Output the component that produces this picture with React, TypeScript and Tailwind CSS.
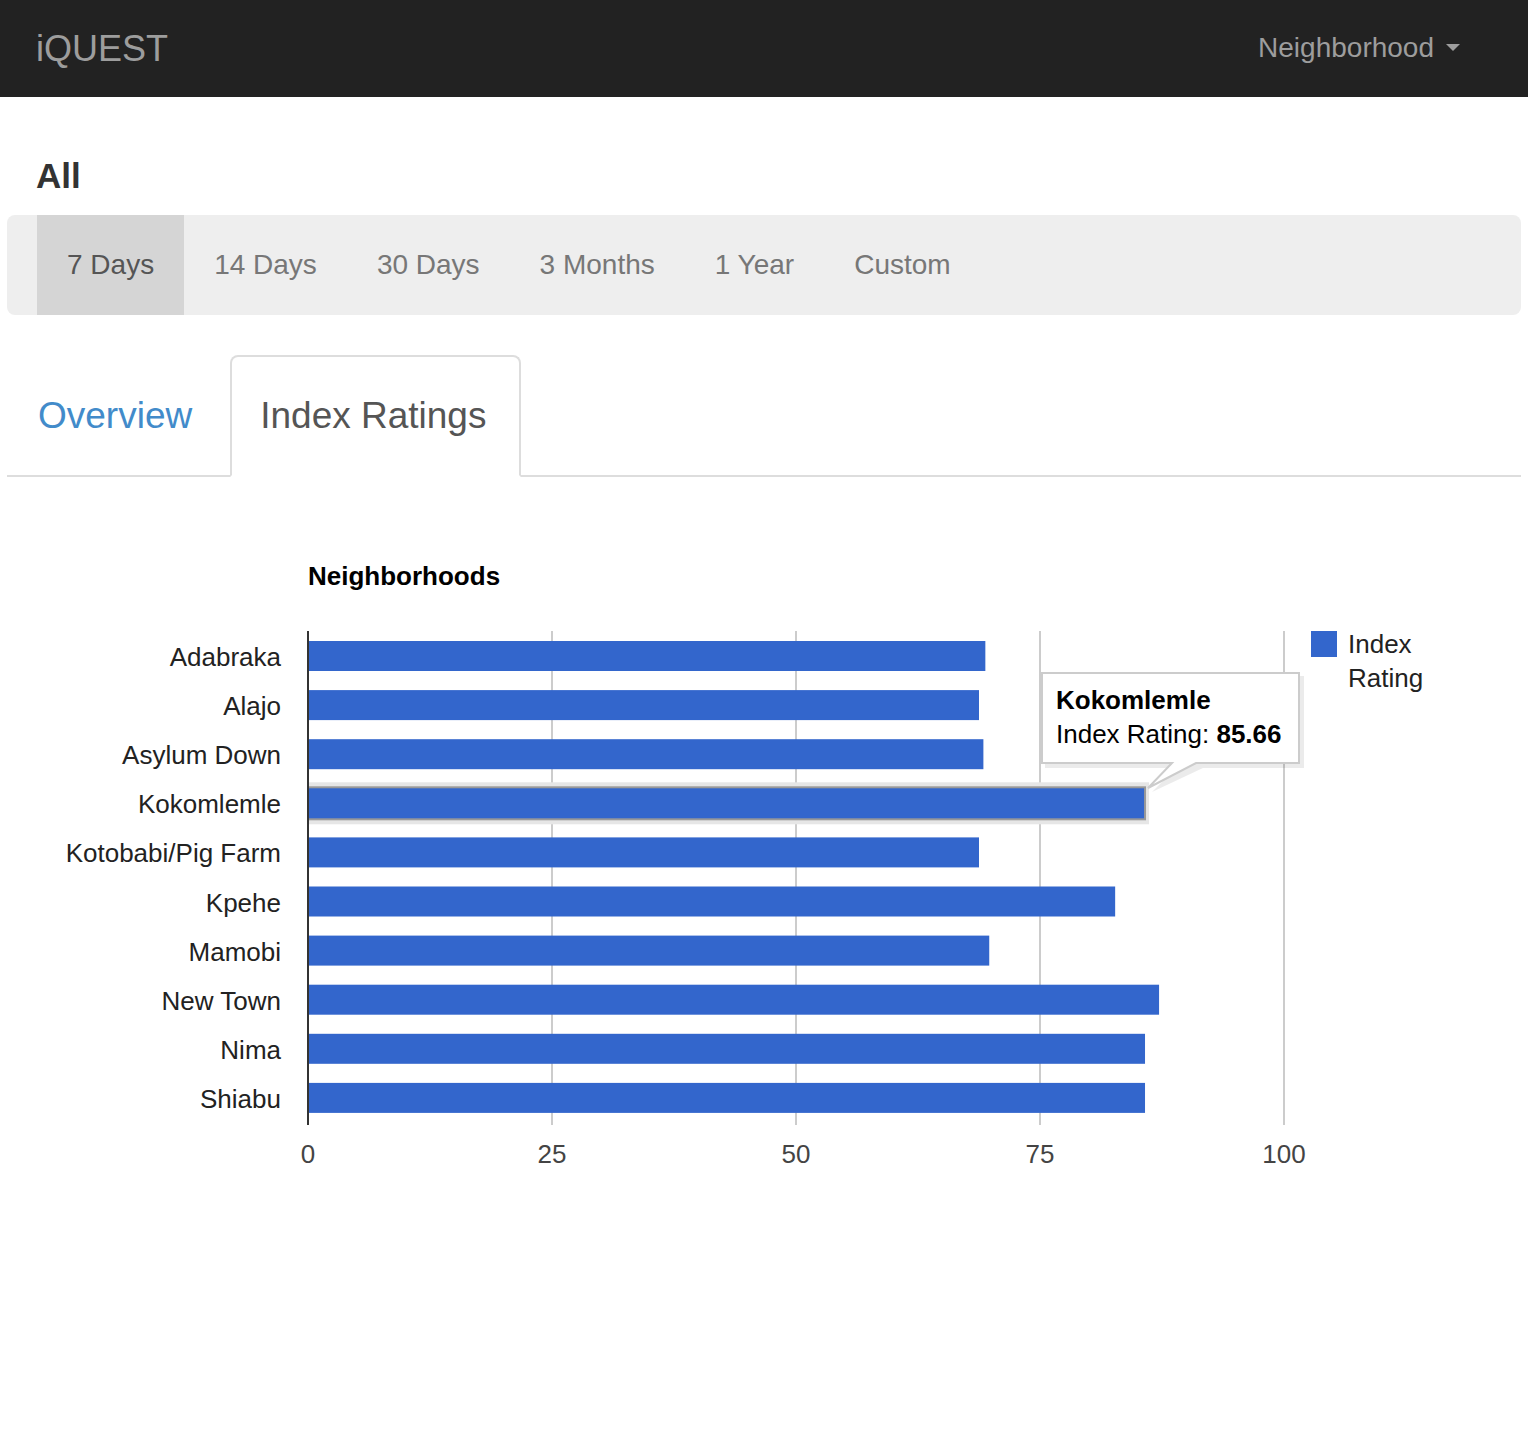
import React from 'react';

const ranges = ['7 Days', '14 Days', '30 Days', '3 Months', '1 Year', 'Custom'];

const rows = [
  { name: 'Adabraka', value: 69.4 },
  { name: 'Alajo', value: 68.75 },
  { name: 'Asylum Down', value: 69.2 },
  { name: 'Kokomlemle', value: 85.66 },
  { name: 'Kotobabi/Pig Farm', value: 68.75 },
  { name: 'Kpehe', value: 82.7 },
  { name: 'Mamobi', value: 69.8 },
  { name: 'New Town', value: 87.2 },
  { name: 'Nima', value: 85.76 },
  { name: 'Shiabu', value: 85.76 },
];

const X0 = 308;
const PX = 9.76;
const TOP = 641;
const PITCH = 49.1;
const FONT = '"Liberation Sans", Arial, sans-serif';

const BarChart: React.FC = () => {
  const ticks = [0, 25, 50, 75, 100];
  const hovered = 3;
  const hy = TOP + hovered * PITCH;
  const hx = X0 + rows[hovered].value * PX;

  return (
    <svg viewBox="0 540 1528 660" width={1528} height={660} className="block" style={{ fontFamily: FONT }}>
      <text x={308} y={585} fontSize={26} fontWeight="bold" fill="#000">Neighborhoods</text>

      {/* grid */}
      {ticks.slice(1).map(t => (
        <line key={t} x1={X0 + t * PX} x2={X0 + t * PX} y1={631} y2={1125} stroke="#cccccc" strokeWidth={2} />
      ))}

      {/* hover ring */}
      <rect x={X0 - 1} y={hy - 6} width={hx - X0 + 6} height={42} fill="#e6e6e6" />
      <rect x={X0} y={hy - 2} width={hx - X0 + 2} height={34} fill="#999999" />

      {/* bars */}
      {rows.map((r, i) => (
        <g key={r.name}>
          <rect x={X0} y={TOP + i * PITCH} width={r.value * PX} height={30} fill="#3366cc" />
          <text x={281} y={TOP + i * PITCH + 25} fontSize={26} textAnchor="end" fill="#222222">{r.name}</text>
        </g>
      ))}

      {/* axis */}
      <line x1={X0} x2={X0} y1={631} y2={1125} stroke="#333333" strokeWidth={2} />
      {ticks.map(t => (
        <text key={t} x={X0 + t * PX} y={1163} fontSize={26} textAnchor="middle" fill="#444444">{t}</text>
      ))}

      {/* legend */}
      <rect x={1311} y={631} width={26} height={26} fill="#3366cc" />
      <text x={1348} y={653} fontSize={26} fill="#222222">Index</text>
      <text x={1348} y={687} fontSize={26} fill="#222222">Rating</text>

      {/* tooltip */}
      <g>
        <path d="M1045 676 H1304 V768 H1203 L1152 792 L1176 768 H1045 Z" fill="#000" opacity={0.08} />
        <path d="M1042 673 H1299 V763 H1196 L1148 788 L1172 763 H1042 Z" fill="#ffffff" stroke="#cccccc" strokeWidth={2} />
        <text x={1056} y={709} fontSize={26} fontWeight="bold" fill="#000">Kokomlemle</text>
        <text x={1056} y={743} fontSize={26} fill="#000">
          Index Rating: <tspan fontWeight="bold">85.66</tspan>
        </text>
      </g>
    </svg>
  );
};

const App: React.FC = () => {
  return (
    <div className="min-h-[1440px] w-[1528px] bg-white font-['Liberation_Sans',Arial,sans-serif]">
      {/* Navbar */}
      <nav className="h-[97px] bg-[#222222] flex items-center justify-between pl-[36px] pr-[68px]">
        <span className="text-[36px] text-[#9d9d9d] leading-none">iQUEST</span>
        <div className="flex items-center text-[28px] text-[#9d9d9d] -mt-[2px]">
          <span>Neighborhood</span>
          <span className="ml-[12px] w-0 h-0 border-l-[7px] border-r-[7px] border-t-[7px] border-l-transparent border-r-transparent border-t-[#9d9d9d]"></span>
        </div>
      </nav>

      <div className="px-[7px]">
        <h4 className="mt-[59px] pl-[29px] text-[35px] leading-[40px] font-bold text-[#333333]">All</h4>

        {/* Date range pills */}
        <div className="mt-[19px] h-[100px] bg-[#eeeeee] rounded-[8px] pl-[30px] flex">
          {ranges.map((r, i) => (
            <div
              key={r}
              className={`px-[30px] flex items-center text-[28px] ${
                i === 0 ? 'bg-[#d5d5d5] text-[#555555]' : 'text-[#777777]'
              }`}
            >
              {r}
            </div>
          ))}
        </div>

        {/* Tabs */}
        <ul className="mt-[40px] flex border-b-2 border-[#dddddd]">
          <li className="-mb-[2px] mr-[6px]">
            <a className="h-[122px] pl-[29px] pr-[30px] flex items-center text-[37px] text-[#428bca] border-2 border-transparent">
              Overview
            </a>
          </li>
          <li className="-mb-[2px]">
            <a className="h-[122px] pl-[28px] pr-[33px] flex items-center text-[37px] text-[#555555] bg-white border-2 border-[#dddddd] border-b-white rounded-t-[8px]">
              Index Ratings
            </a>
          </li>
        </ul>
      </div>

      <div className="mt-[63px]">
        <BarChart />
      </div>
    </div>
  );
};

export default App;
